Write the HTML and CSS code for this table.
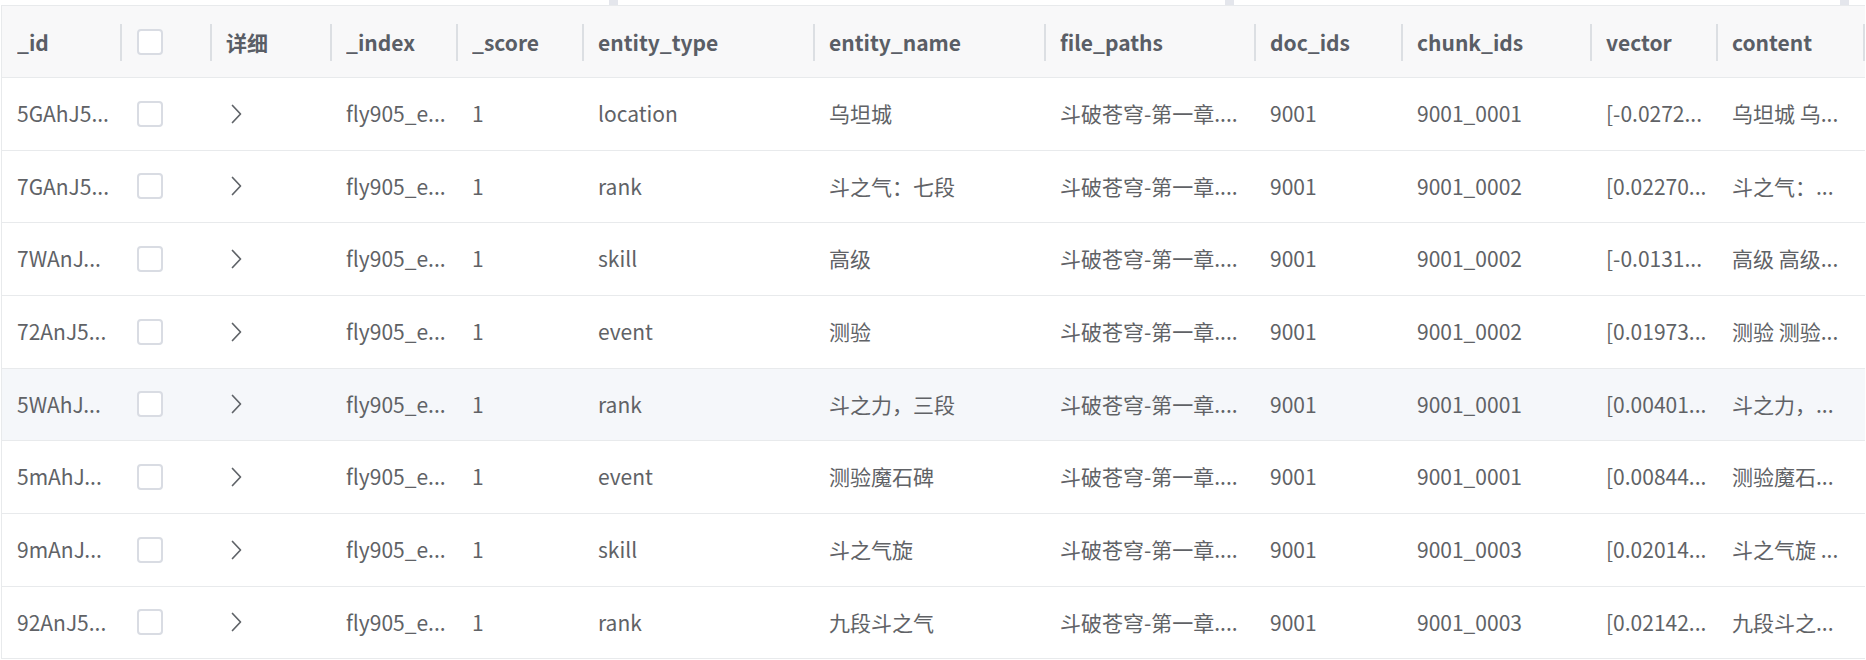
FILE: index.html
```html
<!DOCTYPE html>
<html lang="zh-CN">
<head>
<meta charset="utf-8">
<title>entities</title>
<link rel="stylesheet" href="styles.css">
</head>
<body>
<div class="topstrip">
  <div class="thumb thumb1"></div>
  <div class="thumb thumb2"></div>
  <div class="thumb thumb3"></div>
</div>
<div class="table">
  <div class="row head">
    <div class="hcell"><span class="txt">_id</span></div>
    <div class="hcell"><span class="cb"></span></div>
    <div class="hcell"><span class="txt">详细</span></div>
    <div class="hcell"><span class="txt">_index</span></div>
    <div class="hcell"><span class="txt">_score</span></div>
    <div class="hcell"><span class="txt">entity_type</span></div>
    <div class="hcell"><span class="txt">entity_name</span></div>
    <div class="hcell"><span class="txt">file_paths</span></div>
    <div class="hcell"><span class="txt">doc_ids</span></div>
    <div class="hcell"><span class="txt">chunk_ids</span></div>
    <div class="hcell"><span class="txt">vector</span></div>
    <div class="hcell"><span class="txt">content</span></div>
  </div>

  <div class="row">
    <div class="cell">5GAhJ5...</div>
    <div class="cell"><span class="cb"></span></div>
    <div class="cell"><svg class="chev" width="20" height="20" viewBox="0 0 20 20"><path d="M6.5 1.5 L14.5 10 L6.5 18.5"/></svg></div>
    <div class="cell">fly905_e...</div>
    <div class="cell">1</div>
    <div class="cell">location</div>
    <div class="cell">乌坦城</div>
    <div class="cell">斗破苍穹-第一章....</div>
    <div class="cell">9001</div>
    <div class="cell">9001_0001</div>
    <div class="cell">[-0.0272...</div>
    <div class="cell">乌坦城 乌...</div>
  </div>

  <div class="row">
    <div class="cell">7GAnJ5...</div>
    <div class="cell"><span class="cb"></span></div>
    <div class="cell"><svg class="chev" width="20" height="20" viewBox="0 0 20 20"><path d="M6.5 1.5 L14.5 10 L6.5 18.5"/></svg></div>
    <div class="cell">fly905_e...</div>
    <div class="cell">1</div>
    <div class="cell">rank</div>
    <div class="cell">斗之气：七段</div>
    <div class="cell">斗破苍穹-第一章....</div>
    <div class="cell">9001</div>
    <div class="cell">9001_0002</div>
    <div class="cell">[0.02270...</div>
    <div class="cell">斗之气：...</div>
  </div>

  <div class="row">
    <div class="cell">7WAnJ...</div>
    <div class="cell"><span class="cb"></span></div>
    <div class="cell"><svg class="chev" width="20" height="20" viewBox="0 0 20 20"><path d="M6.5 1.5 L14.5 10 L6.5 18.5"/></svg></div>
    <div class="cell">fly905_e...</div>
    <div class="cell">1</div>
    <div class="cell">skill</div>
    <div class="cell">高级</div>
    <div class="cell">斗破苍穹-第一章....</div>
    <div class="cell">9001</div>
    <div class="cell">9001_0002</div>
    <div class="cell">[-0.0131...</div>
    <div class="cell">高级 高级...</div>
  </div>

  <div class="row">
    <div class="cell">72AnJ5...</div>
    <div class="cell"><span class="cb"></span></div>
    <div class="cell"><svg class="chev" width="20" height="20" viewBox="0 0 20 20"><path d="M6.5 1.5 L14.5 10 L6.5 18.5"/></svg></div>
    <div class="cell">fly905_e...</div>
    <div class="cell">1</div>
    <div class="cell">event</div>
    <div class="cell">测验</div>
    <div class="cell">斗破苍穹-第一章....</div>
    <div class="cell">9001</div>
    <div class="cell">9001_0002</div>
    <div class="cell">[0.01973...</div>
    <div class="cell">测验 测验...</div>
  </div>

  <div class="row hover">
    <div class="cell">5WAhJ...</div>
    <div class="cell"><span class="cb"></span></div>
    <div class="cell"><svg class="chev" width="20" height="20" viewBox="0 0 20 20"><path d="M6.5 1.5 L14.5 10 L6.5 18.5"/></svg></div>
    <div class="cell">fly905_e...</div>
    <div class="cell">1</div>
    <div class="cell">rank</div>
    <div class="cell">斗之力，三段</div>
    <div class="cell">斗破苍穹-第一章....</div>
    <div class="cell">9001</div>
    <div class="cell">9001_0001</div>
    <div class="cell">[0.00401...</div>
    <div class="cell">斗之力，...</div>
  </div>

  <div class="row">
    <div class="cell">5mAhJ...</div>
    <div class="cell"><span class="cb"></span></div>
    <div class="cell"><svg class="chev" width="20" height="20" viewBox="0 0 20 20"><path d="M6.5 1.5 L14.5 10 L6.5 18.5"/></svg></div>
    <div class="cell">fly905_e...</div>
    <div class="cell">1</div>
    <div class="cell">event</div>
    <div class="cell">测验魔石碑</div>
    <div class="cell">斗破苍穹-第一章....</div>
    <div class="cell">9001</div>
    <div class="cell">9001_0001</div>
    <div class="cell">[0.00844...</div>
    <div class="cell">测验魔石...</div>
  </div>

  <div class="row">
    <div class="cell">9mAnJ...</div>
    <div class="cell"><span class="cb"></span></div>
    <div class="cell"><svg class="chev" width="20" height="20" viewBox="0 0 20 20"><path d="M6.5 1.5 L14.5 10 L6.5 18.5"/></svg></div>
    <div class="cell">fly905_e...</div>
    <div class="cell">1</div>
    <div class="cell">skill</div>
    <div class="cell">斗之气旋</div>
    <div class="cell">斗破苍穹-第一章....</div>
    <div class="cell">9001</div>
    <div class="cell">9001_0003</div>
    <div class="cell">[0.02014...</div>
    <div class="cell">斗之气旋 ...</div>
  </div>

  <div class="row">
    <div class="cell">92AnJ5...</div>
    <div class="cell"><span class="cb"></span></div>
    <div class="cell"><svg class="chev" width="20" height="20" viewBox="0 0 20 20"><path d="M6.5 1.5 L14.5 10 L6.5 18.5"/></svg></div>
    <div class="cell">fly905_e...</div>
    <div class="cell">1</div>
    <div class="cell">rank</div>
    <div class="cell">九段斗之气</div>
    <div class="cell">斗破苍穹-第一章....</div>
    <div class="cell">9001</div>
    <div class="cell">9001_0003</div>
    <div class="cell">[0.02142...</div>
    <div class="cell">九段斗之...</div>
  </div>
</div>
</body>
</html>
```

FILE: styles.css
```css
html, body {
  margin: 0;
  padding: 0;
  background: #ffffff;
}

body {
  font-family: "Noto Sans CJK SC", "Noto Sans", sans-serif;
  font-size: 21px;
  color: #606266;
  overflow: hidden;
}

.topstrip {
  height: 5px;
  display: flex;
}

.thumb {
  width: 9px;
  height: 5px;
  background: #e4e6ec;
}

.thumb1 { margin-left: 609px; }
.thumb2 { margin-left: 607px; }
.thumb3 { margin-left: 606px; }

.table {
  margin-left: 1px;
  width: 1863px;
  border-left: 1px solid #e8eaec;
  border-top: 1px solid #e8eaec;
}

.row {
  display: grid;
  grid-template-columns: 119px 90px 120px 126px 126px 231px 231px 210px 147px 189px 126px 147px;
  height: 72.67px;
  box-sizing: border-box;
  border-bottom: 1px solid #e8eaec;
  align-items: center;
}

.row.hover {
  background: #f5f7fa;
}

.row.head {
  height: 72px;
  background: #f8f8f9;
  font-weight: bold;
  color: #5a5e66;
  align-items: stretch;
}

.hcell {
  position: relative;
  display: flex;
  align-items: center;
  padding: 0 15px;
  min-width: 0;
}

.hcell::after {
  content: "";
  position: absolute;
  right: -1px;
  top: 50%;
  margin-top: -18px;
  width: 2px;
  height: 37px;
  background: #dcdfe3;
}

.txt {
  overflow: hidden;
  white-space: nowrap;
  text-overflow: ellipsis;
}

.cell {
  display: flex;
  align-items: center;
  padding: 0 15px;
  min-width: 0;
  overflow: hidden;
  white-space: nowrap;
  text-overflow: ellipsis;
  line-height: 1.4;
}

.cb {
  display: block;
  width: 26px;
  height: 26px;
  box-sizing: border-box;
  border: 2px solid #d9dce3;
  border-radius: 4px;
  background: #ffffff;
  margin-left: 1px;
  flex: none;
}

.chev {
  display: block;
  flex: none;
  fill: none;
  stroke: #5f6368;
  stroke-width: 1.7;
  stroke-linecap: round;
  stroke-linejoin: round;
}
```
